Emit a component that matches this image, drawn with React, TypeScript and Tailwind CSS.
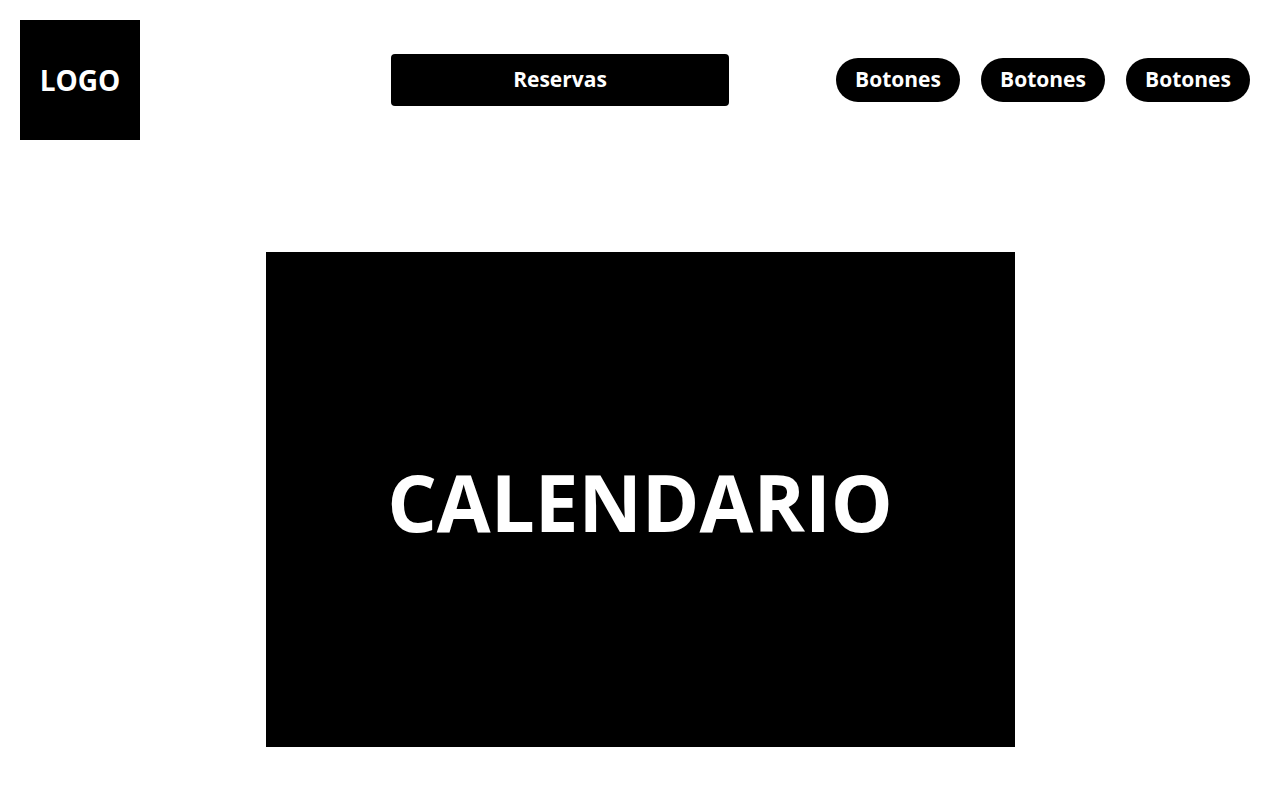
export default function App() {
  const font = { fontFamily: '"Open Sans", "Noto Sans", sans-serif' };
  return (
    <div className="min-h-[800px] bg-white" style={font}>
      <header className="flex items-center pl-[20px] pr-[30px] pt-[20px]">
        <div className="flex h-[120px] w-[120px] items-center justify-center bg-black text-[28px] font-bold text-white">
          LOGO
        </div>
        <button className="ml-[251px] flex h-[52px] w-[338px] items-center justify-center rounded-[4px] bg-black text-[21px] font-bold text-white">
          Reservas
        </button>
        <nav className="ml-auto flex items-center gap-[21px]">
          {[0, 1, 2].map((i) => (
            <button
              key={i}
              className="flex h-[44px] w-[124px] items-center justify-center rounded-full bg-black text-[21px] font-bold text-white"
            >
              Botones
            </button>
          ))}
        </nav>
      </header>
      <main className="mt-[112px] flex justify-center">
        <div className="flex h-[495px] w-[749px] items-center justify-center bg-black pt-[5px] text-[78px] font-bold text-white">
          CALENDARIO
        </div>
      </main>
    </div>
  );
}
